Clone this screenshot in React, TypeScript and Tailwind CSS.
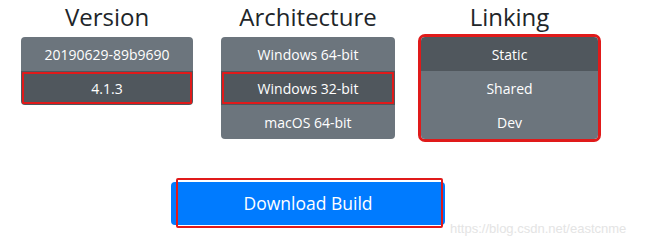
import React from "react";

type Item = { label: string; active?: boolean; marked?: boolean };

const font = { fontFamily: '"Open Sans", "Noto Sans", sans-serif' };

function Group({
  title,
  items,
  width,
  outlined,
}: {
  title: string;
  items: Item[];
  width: string;
  outlined?: boolean;
}) {
  return (
    <div className={`flex flex-col ${width}`}>
      <h2 className="h-[37px] text-center text-[24px] leading-[33px] text-[#212529]">{title}</h2>
      <div
        className={`flex flex-col overflow-hidden rounded-[4px] ${
          outlined ? "outline-[3px] outline-solid outline-[#e01a1a]" : ""
        }`}
      >
        {items.map((it) => (
          <div
            key={it.label}
            className={`relative flex h-[34px] items-center justify-center text-[14px] text-white ${
              it.active ? "bg-[#50575d]" : "bg-[#6c757d]"
            }`}
          >
            {it.label}
            {it.marked && (
              <span className="pointer-events-none absolute inset-x-[1px] inset-y-[1px] rounded-[1px] border-[2.5px] border-[#e01a1a]" />
            )}
          </div>
        ))}
      </div>
    </div>
  );
}

export default function App() {
  return (
    <div className="relative h-[241px] w-[650px] overflow-hidden bg-white" style={font}>
      <div className="flex pl-[21px] pt-0">
        <Group
          title="Version"
          width="w-[172px]"
          items={[
            { label: "20190629-89b9690" },
            { label: "4.1.3", active: true, marked: true },
          ]}
        />
        <div className="ml-[28px]">
          <Group
            title="Architecture"
            width="w-[174px]"
            items={[
              { label: "Windows 64-bit" },
              { label: "Windows 32-bit", active: true, marked: true },
              { label: "macOS 64-bit" },
            ]}
          />
        </div>
        <div className="ml-[26px]">
          <Group
            title="Linking"
            width="w-[177px]"
            outlined
            items={[{ label: "Static", active: true }, { label: "Shared" }, { label: "Dev" }]}
          />
        </div>
      </div>

      <div className="ml-[171px] mt-[43px] flex items-end">
        <div className="relative">
          <button className="flex h-[43px] w-[274px] items-center justify-center rounded-[4px] bg-[#007bff] text-[17.5px] text-white">
            Download Build
          </button>
          <span className="pointer-events-none absolute left-[5px] right-[2px] top-[-4px] bottom-[-3px] rounded-[2px] border-[2px] border-[#e01a1a]" />
        </div>
        <span
          className="ml-[5px] mb-[-13px] text-[13px] text-[#e4e4e4]"
          style={{ fontFamily: '"Liberation Sans", Arial, sans-serif' }}
        >
          https://blog.csdn.net/eastcnme
        </span>
      </div>
    </div>
  );
}
